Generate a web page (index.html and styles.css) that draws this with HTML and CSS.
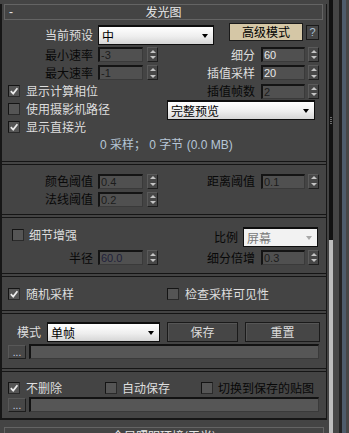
FILE: index.html
```html
<!DOCTYPE html>
<html lang="zh">
<head>
<meta charset="utf-8">
<title>发光图</title>
<link rel="stylesheet" href="styles.css">
</head>
<body>
<div class="app">
  <div class="main">
    <div class="panel">
      <div class="rhead"><span class="minus">-</span><span class="rtitle">发光图</span><span></span></div>

      <div class="sec s1">
        <div class="rowA">
          <span class="lbl lw">当前预设</span>
          <div class="dd preset"><span class="ddt">中</span><i class="arr"></i></div>
          <div class="adv">高级模式</div>
          <div class="qbtn">?</div>
        </div>
        <div class="grow">
          <div class="cell"><span class="lbl lw dis">最小速率</span><span class="num dis">-3</span><span class="spin"></span></div>
          <div class="cell r"><span class="lbl rw">细分</span><span class="num">60</span><span class="spin"></span></div>
        </div>
        <div class="grow">
          <div class="cell"><span class="lbl lw dis">最大速率</span><span class="num dis">-1</span><span class="spin"></span></div>
          <div class="cell r"><span class="lbl rw">插值采样</span><span class="num">20</span><span class="spin"></span></div>
        </div>
        <div class="grow">
          <div class="cell"><span class="cb on"><svg viewBox="0 0 10 10"><path d="M1.8 5.2 4.2 7.6 8.4 2.3"/></svg></span><span class="cbl">显示计算相位</span></div>
          <div class="cell r"><span class="lbl rw dis">插值帧数</span><span class="num dis">2</span><span class="spin"></span></div>
        </div>
        <div class="grow rowE">
          <div class="cell top"><span class="cb"></span><span class="cbl">使用摄影机路径</span></div>
          <div class="cell"><div class="dd preview"><span class="ddt">完整预览</span><i class="arr"></i></div></div>
        </div>
        <div class="grow rowF">
          <div class="cell"><span class="cb on"><svg viewBox="0 0 10 10"><path d="M1.8 5.2 4.2 7.6 8.4 2.3"/></svg></span><span class="cbl">显示直接光</span></div>
        </div>
        <div class="info">0 采样； 0 字节 (0.0 MB)</div>
      </div>

      <div class="sep"></div>

      <div class="sec s2">
        <div class="grow">
          <div class="cell"><span class="lbl lw dis">颜色阈值</span><span class="num dis">0.4</span><span class="spin"></span></div>
          <div class="cell r"><span class="lbl rw dis">距离阈值</span><span class="num dis">0.1</span><span class="spin"></span></div>
        </div>
        <div class="grow">
          <div class="cell"><span class="lbl lw dis">法线阈值</span><span class="num dis">0.2</span><span class="spin"></span></div>
        </div>
      </div>

      <div class="sep"></div>

      <div class="sec s3">
        <div class="grow rowJ">
          <div class="cell top detail"><span class="cb"></span><span class="cbl">细节增强</span></div>
          <div class="cell"><span class="lbl scl dis">比例</span><div class="dd screen"><span class="ddt">屏幕</span><i class="arr"></i></div></div>
        </div>
        <div class="grow rowK">
          <div class="cell"><span class="lbl lw dis">半径</span><span class="num dis blue">60.0</span><span class="spin"></span></div>
          <div class="cell r"><span class="lbl rw dis">细分倍增</span><span class="num dis">0.3</span><span class="spin"></span></div>
        </div>
      </div>

      <div class="sep"></div>

      <div class="sec s4">
        <div class="grow rowL">
          <div class="cell"><span class="cb on"><svg viewBox="0 0 10 10"><path d="M1.8 5.2 4.2 7.6 8.4 2.3"/></svg></span><span class="cbl">随机采样</span></div>
          <div class="cell chk"><span class="cb"></span><span class="cbl">检查采样可见性</span></div>
        </div>
      </div>

      <div class="sep"></div>

      <div class="sec s5">
        <div class="rowM">
          <span class="lbl mode">模式</span>
          <div class="dd single"><span class="ddt">单帧</span><i class="arr"></i></div>
          <div class="btn save">保存</div>
          <div class="btn reset">重置</div>
        </div>
        <div class="rowN">
          <div class="dots">...</div>
          <div class="field"></div>
        </div>
      </div>

      <div class="sep"></div>

      <div class="sec s6">
        <div class="rowO">
          <span class="cb on"><svg viewBox="0 0 10 10"><path d="M1.8 5.2 4.2 7.6 8.4 2.3"/></svg></span><span class="cbl first">不删除</span>
          <span class="cb auto"></span><span class="cbl">自动保存</span>
          <span class="cb sw"></span><span class="cbl dis">切换到保存的贴图</span>
        </div>
        <div class="rowN rowP">
          <div class="dots">...</div>
          <div class="field"></div>
        </div>
      </div>
    </div>
    <div class="rhead next"><span class="minus">+</span><span class="rtitle">全局照明环境(天光)</span><span></span></div>
  </div>
  <div class="side">
    <div class="s-g1"></div>
    <div class="s-track"><div class="s-thumb"><i></i><i></i><i></i><i></i></div></div>
    <div class="s-g2"></div>
    <div class="s-g3"></div>
    <div class="s-g4"></div>
    <div class="s-g5"></div>
  </div>
</div>
</body>
</html>
```

FILE: styles.css
```css
html, body {
  margin: 0;
  padding: 0;
}
body {
  width: 349px;
  height: 433px;
  overflow: hidden;
  background: #444444;
  color: #dedede;
  font-family: "Noto Sans CJK SC", "Noto Sans", sans-serif;
  font-size: 12px;
  line-height: 14px;
}
.app {
  display: flex;
  height: 433px;
}
.main {
  width: 327px;
  flex: none;
  padding-top: 4px;
  box-sizing: border-box;
}
.panel {
  border-left: 2px solid #161616;
  border-right: 1px solid #161616;
  border-bottom: 2px solid #161616;
}

/* rollout header */
.rhead {
  margin: 0 3px 0 2px;
  height: 16px;
  box-sizing: border-box;
  border: 1px solid #646464;
  display: grid;
  grid-template-columns: 1fr auto 1fr;
  align-items: center;
  color: #e6e6e6;
}
.rhead.next {
  margin: 7px 3px 0 4px;
  height: 18px;
}
.minus {
  padding-left: 4px;
  font-family: "Liberation Sans", sans-serif;
  font-size: 12px;
}
.rhead.next .minus { visibility: hidden; }

/* sections */
.sep {
  height: 4px;
  box-sizing: border-box;
  border-top: 1px solid #151515;
  border-bottom: 1px solid #151515;
}
.sec { box-sizing: border-box; }
.s1 { height: 141px; }
.s2 { height: 49px; padding-top: 7px; }
.s3 { height: 55px; padding-top: 8px; }
.s4 { height: 33px; padding-top: 10px; }
.s5 { height: 54px; padding-top: 8px; }
.s6 { height: 46px; padding-top: 9px; }

/* generic rows */
.grow {
  display: grid;
  grid-template-columns: 156px 161px;
  height: 18.33px;
  align-items: center;
}
.cell {
  display: flex;
  align-items: center;
}
.lbl {
  flex: none;
  white-space: nowrap;
}
.lw { width: 91px; text-align: right; }
.rw { width: 97px; text-align: right; }
.dis { color: #080808; }

.num {
  flex: none;
  margin-left: 5px;
  width: 45px;
  height: 15px;
  box-sizing: border-box;
  background: #505050;
  border-top: 2px solid #141414;
  border-left: 2px solid #141414;
  border-right: 1px solid #3a3a3a;
  border-bottom: 1px solid #3a3a3a;
  padding-left: 1px;
  font-family: "Liberation Sans", sans-serif;
  font-size: 11px;
  line-height: 12px;
  color: #e8e8e8;
}
.num.dis { color: #1c1c1c; }
.num.blue { color: #20203a; }
.cell.r .num { margin-left: 6px; width: 44px; }

.spin {
  flex: none;
  margin-left: 4px;
  width: 11px;
  height: 15px;
  box-sizing: border-box;
  background: #474747;
  border: 1px solid #1e1e1e;
  border-top-color: #5a5a5a;
  border-left-color: #5a5a5a;
  display: flex;
  flex-direction: column;
  align-items: center;
  justify-content: space-around;
}
.cell.r .spin { margin-left: 3px; }
.spin::before {
  content: "";
  width: 0;
  height: 0;
  border-left: 3px solid transparent;
  border-right: 3px solid transparent;
  border-bottom: 3px solid #c4c4c4;
}
.spin::after {
  content: "";
  width: 0;
  height: 0;
  border-left: 3px solid transparent;
  border-right: 3px solid transparent;
  border-top: 3px solid #c4c4c4;
}

/* checkbox */
.cb {
  flex: none;
  width: 12px;
  height: 12px;
  box-sizing: border-box;
  background: #555555;
  border: 1px solid #2a2a2a;
  border-top-color: #141414;
  border-left-color: #141414;
  margin-left: 6px;
  display: flex;
  align-items: center;
  justify-content: center;
}
.cb svg {
  width: 10px;
  height: 10px;
  fill: none;
  stroke: #ececec;
  stroke-width: 1.7;
}
.cbl {
  margin-left: 6px;
  white-space: nowrap;
}

/* dropdowns */
.dd {
  flex: none;
  height: 20px;
  box-sizing: border-box;
  border: 1px solid #0e0e0e;
  border-top-width: 2px;
  background: linear-gradient(#ffffff, #eeeeee 55%, #d6d6d6);
  color: #000;
  display: flex;
  align-items: center;
  justify-content: space-between;
  padding: 0 5px 0 3px;
}
.arr {
  width: 0;
  height: 0;
  border-left: 3px solid transparent;
  border-right: 3px solid transparent;
  border-top: 4px solid #000;
}
.preset { margin-left: 5px; width: 116px; }
.preview { margin-left: 9px; width: 148px; }
.screen {
  margin-left: 5px;
  width: 75px;
  background: #f2f2f2;
  color: #7a7a7a;
}
.screen .arr { border-top-color: #a8a8a8; }
.single { margin-left: 6px; width: 113px; }

/* row A */
.rowA {
  display: flex;
  align-items: flex-start;
  height: 25.5px;
}
.rowA .lbl { margin-top: 8px; }
.rowA .preset { margin-top: 5px; }
.adv {
  flex: none;
  margin: 3px 0 0 15px;
  width: 74px;
  height: 18px;
  box-sizing: border-box;
  background: #d5c7a6;
  border: 1px solid #1a1a1a;
  color: #000;
  text-align: center;
  line-height: 16px;
}
.qbtn {
  flex: none;
  margin: 5px 0 0 3px;
  width: 13px;
  height: 15px;
  box-sizing: border-box;
  background: #474747;
  border: 1px solid #1a1a1a;
  color: #a9c0d6;
  font-family: "Liberation Sans", sans-serif;
  font-size: 11px;
  line-height: 13px;
  text-align: center;
}

.rowE { height: 19.5px; align-items: start; }
.cell.top { margin-top: 2px; }
.rowF { height: 13px; }
.info {
  height: 28px;
  box-sizing: border-box;
  padding: 5px 0 0 98px;
  color: #b6c6d6;
  font-family: "Liberation Sans", "Noto Sans CJK SC", sans-serif;
  white-space: nowrap;
}

/* section 3 */
.rowJ { height: 22px; align-items: start; }
.rowJ .cell.top { margin-top: 2px; }
.detail .cb { margin-left: 10px; }
.detail .cbl { margin-left: 5px; }
.rowJ .cell:last-child { margin-top: 1px; }
.scl { width: 80px; text-align: right; }
.rowK { height: 19px; }

/* section 4 */
.rowL { height: 14px; }
.chk .cb { margin-left: 9px; }

/* section 5 */
.rowM {
  display: flex;
  align-items: center;
  height: 20px;
}
.mode { margin-left: 15px; }
.btn {
  flex: none;
  height: 20px;
  box-sizing: border-box;
  border: 1px solid #1a1a1a;
  box-shadow: inset 1px 1px 0 #565656;
  background: #464646;
  text-align: center;
  line-height: 18px;
  color: #dcdcdc;
}
.save { margin-left: 7px; width: 71px; }
.reset { margin-left: 7px; width: 75px; }
.rowN {
  display: flex;
  margin-top: 2px;
  height: 15px;
}
.dots {
  flex: none;
  margin-left: 6px;
  width: 18px;
  height: 14px;
  margin-top: 1px;
  box-sizing: border-box;
  background: #474747;
  border: 1px solid #1e1e1e;
  border-top-color: #585858;
  border-left-color: #585858;
  color: #c8d4e6;
  font-family: "Liberation Sans", sans-serif;
  font-size: 10px;
  line-height: 14px;
  text-align: center;
  letter-spacing: 0;
}
.field {
  flex: none;
  margin-left: 3px;
  width: 290px;
  height: 15px;
  box-sizing: border-box;
  background: #565656;
  border-top: 2px solid #121212;
  border-left: 2px solid #121212;
  border-right: 1px solid #3a3a3a;
  border-bottom: 1px solid #3a3a3a;
}

/* section 6 */
.rowO {
  display: flex;
  align-items: center;
  height: 14px;
}
.rowO .cbl { margin-left: 5px; }
.rowO .cbl.first { margin-left: 6px; }
.cb.auto { margin-left: 43px; }
.cb.sw { margin-left: 31px; }

/* side scrollbars */
.side {
  display: flex;
  width: 22px;
  flex: none;
  height: 433px;
}
.s-g1 { width: 2px; background: #444444; }
.s-track {
  width: 4px;
  background: #bdbdbd;
}
.s-thumb {
  height: 240px;
  background: #121212;
  display: flex;
  flex-direction: column;
  justify-content: center;
  align-items: center;
  gap: 1px;
}
.s-thumb i {
  display: block;
  width: 2px;
  height: 1px;
  background: #6e6e6e;
}
.s-g2 { width: 6px; background: #464646; }
.s-g3 { width: 3px; background: #222222; }
.s-g4 { width: 4px; background: #4e5c6b; }
.s-g5 { width: 3px; background: #474747; }
```
